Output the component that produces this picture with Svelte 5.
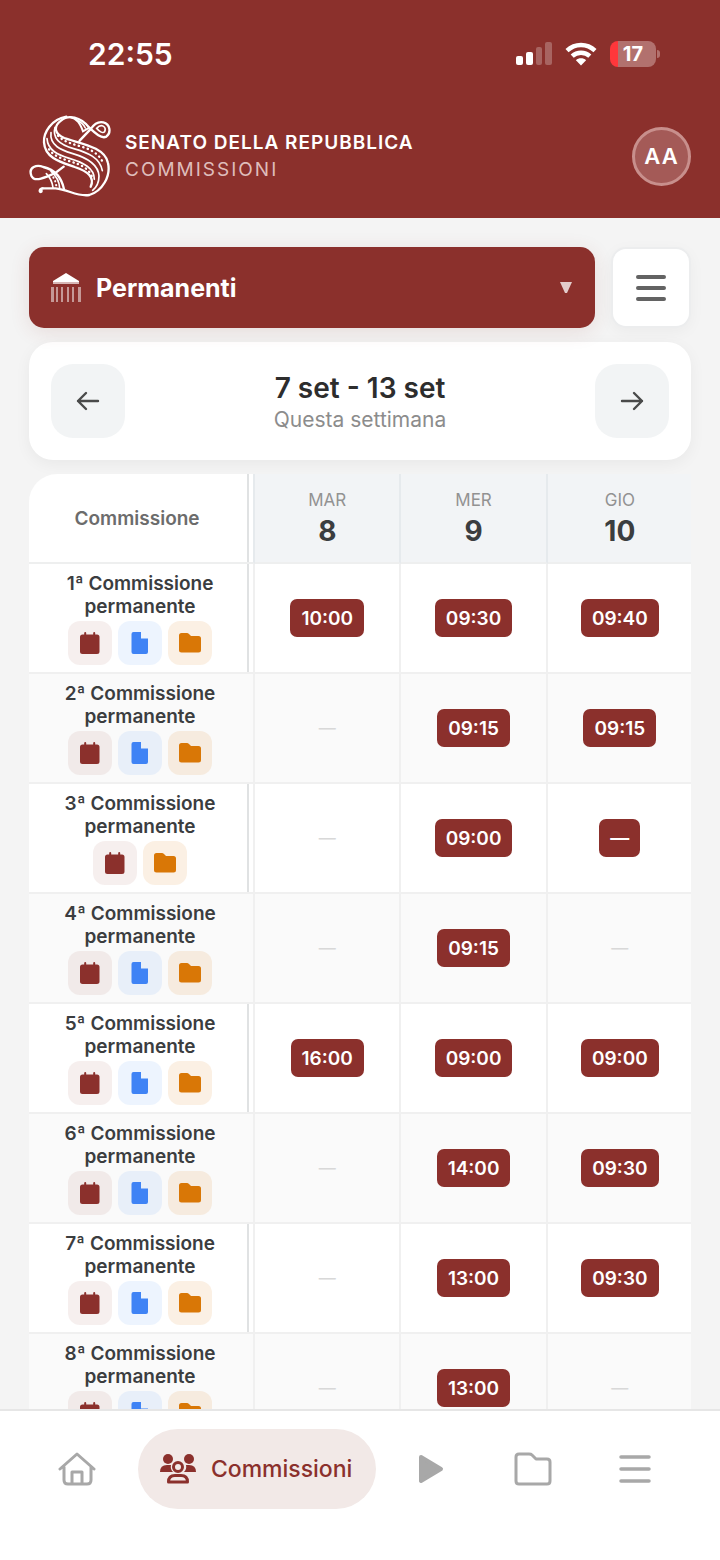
<script>
	const days = [
		{ name: 'MAR', number: 8 },
		{ name: 'MER', number: 9 },
		{ name: 'GIO', number: 10 }
	];

	const commissions = [
		{ id: 1, slots: ['10:00', '09:30', '09:40'], hasDocs: true },
		{ id: 2, slots: [null, '09:15', '09:15'], hasDocs: true },
		{ id: 3, slots: [null, '09:00', '—'], hasDocs: false },
		{ id: 4, slots: [null, '09:15', null], hasDocs: true },
		{ id: 5, slots: ['16:00', '09:00', '09:00'], hasDocs: true },
		{ id: 6, slots: [null, '14:00', '09:30'], hasDocs: true },
		{ id: 7, slots: [null, '13:00', '09:30'], hasDocs: true },
		{ id: 8, slots: [null, '13:00', null], hasDocs: true }
	];
</script>

<div class="app">
	<header>
		<div class="status">
			<span class="clock">22:55</span>
			<div class="indicators">
				<svg width="36" height="24" viewBox="0 0 36 24" fill="#fff" aria-hidden="true">
					<rect x="0" y="14" width="7" height="9" rx="2" />
					<rect x="10" y="10" width="7" height="13" rx="2" />
					<rect x="20" y="5" width="6" height="18" rx="2" opacity=".25" />
					<rect x="29" y="0" width="7" height="23" rx="2" opacity=".25" />
				</svg>
				<svg width="32" height="24" viewBox="0 0 32 24" fill="none" stroke="#fff" stroke-width="4.4" aria-hidden="true">
					<path d="M2 8.7C10 1 22 1 30 8.7" />
					<path d="M7.2 14.2C12 9.6 20 9.6 24.8 14.2" />
					<path d="M10.9 18.2C13.6 15.6 18.4 15.6 21.1 18.2L16 23.5Z" fill="#fff" stroke="none" />
				</svg>
				<div class="battery"><span>17</span></div>
			</div>
		</div>

		<div class="brand">
			<svg class="logo" width="82" height="83" viewBox="26 29 246 249" fill="none" stroke="#fff" stroke-width="7" stroke-linecap="round" aria-hidden="true">
				<path d="M178 106L212 70C222 55 235 48 249 51C270 56 273 83 258 94C243 101 226 85 207 67C180 34 144 27 122 46C97 65 104 87 132 98C176 114 254 124 263 173C272 213 246 257 207 269C171 275 145 253 106 249H66" />
				<path d="M138 34C92 42 69 83 71 111C74 160 126 172 163 185C203 198 224 217 211 244" />
				<path d="M104 66C94 104 130 122 160 130C202 142 238 156 246 196" stroke-width="5" />
				<path d="M92 82C87 121 125 135 155 144C197 156 234 174 236 212C236 232 228 246 217 255" stroke-width="5" />
				<path d="M80 100C82 136 115 149 147 159C190 172 222 188 222 222" stroke-width="5" />
				<path d="M113 91C133 112 162 117 190 126C217 135 238 148 250 176" stroke-width="7" stroke-dasharray="1 13" />
				<path d="M86 132C103 157 142 165 170 175C191 183 206 194 214 212" stroke-width="7" stroke-dasharray="1 13" />
				<path d="M148 35C170 39 179 53 188 78L207 67" stroke-width="6" />
				<path d="M170 45C181 50 190 58 195 68" stroke-width="5" />
				<path d="M229 69C243 53 259 64 253 79C247 86 236 77 229 69Z" stroke-width="5" />
				<path d="M130 184L105 203C73 216 43 233 33 211C23 184 50 177 69 185C102 193 124 216 131 252" />
				<path d="M78 205C92 219 96 231 98 247M92 198C111 214 117 230 118 248" stroke-width="5" />
				<path d="M99 216C106 228 108 238 108 246" stroke-width="6" stroke-dasharray="1 11" />
				<circle cx="61" cy="257" r="4" fill="#fff" stroke-width="5" />
				<path d="M59 254Q60 249 67 249" />
			</svg>
			<div class="brand-text">
				<strong>SENATO DELLA REPUBBLICA</strong>
				<span>COMMISSIONI</span>
			</div>
			<button class="avatar" aria-label="Profilo AA">AA</button>
		</div>
	</header>

	<main>
		<div class="filters">
			<button class="picker">
				<svg width="32" height="32" viewBox="0 0 32 32" fill="#fff" aria-hidden="true">
					<path d="M15 1L28 9V10H2V9Z" />
					<path d="M2 10H28V12H2Z" opacity=".65" />
					<path d="M0 15h3v15H0zM5 15h2v15H5zM10 15h2v15h-2zM16 15h2v15h-2zM21 15h2v15h-2zM27 15h3v15h-3z" opacity=".5" />
				</svg>
				<span>Permanenti</span>
				<svg width="12" height="12" viewBox="0 0 12 12" aria-hidden="true">
					<path d="M0 0H12L7 11H5Z" fill="#e3cccb" />
				</svg>
			</button>
			<button class="menu" aria-label="Opzioni">
				<svg width="32" height="28" viewBox="0 0 32 28" stroke="#636363" stroke-width="4" stroke-linecap="round" aria-hidden="true">
					<path d="M3 3H29M3 14H29M3 25H29" />
				</svg>
			</button>
		</div>

		<div class="week">
			<button aria-label="Settimana precedente">
				<svg width="24" height="20" viewBox="0 0 24 20" aria-hidden="true"><path d="M22 10H2M10 2L2 10L10 18" /></svg>
			</button>
			<div class="range">
				<h2>7 set - 13 set</h2>
				<p>Questa settimana</p>
			</div>
			<button aria-label="Settimana successiva">
				<svg width="24" height="20" viewBox="0 0 24 20" aria-hidden="true"><path d="M2 10H22M14 2L22 10L14 18" /></svg>
			</button>
		</div>

		<div class="table-scroll">
			<table>
				<thead>
					<tr>
						<th class="name" scope="col">Commissione</th>
						{#each days as day}
							<th class="day" scope="col">
								<span>{day.name}</span>
								<b>{day.number}</b>
							</th>
						{/each}
					</tr>
				</thead>
				<tbody>
					{#each commissions as row}
						<tr>
							<th class="name" scope="row">
								<div>{row.id}ª Commissione permanente</div>
								<div class="actions">
									<button class="calendar" aria-label="Calendario">
										<svg width="20" height="22" viewBox="0 0 20 22" fill="currentColor" aria-hidden="true">
											<path d="M2.500 2.500H4.200V1Q4.200 0 5.200 0T6.200 1V2.500H13.200V1Q13.200 0 14.200 0T15.200 1V2.500H17Q19.500 2.500 19.500 5V19.500Q19.500 22 17 22H2.500Q0 22 0 19.500V5Q0 2.500 2.500 2.500Z" />
										</svg>
									</button>
									{#if row.hasDocs}
										<button class="document" aria-label="Documenti">
											<svg width="18" height="22" viewBox="0 0 18 22" fill="currentColor" aria-hidden="true">
												<path d="M2.500 0H10V6.500H17V20Q17 22 15 22H2.500Q.5 22 .5 20V2Q.5 0 2.500 0Z" />
											</svg>
										</button>
									{/if}
									<button class="folder" aria-label="Cartella">
										<svg width="22" height="20" viewBox="0 0 22 20" fill="currentColor" aria-hidden="true">
											<path d="M2.500 0H8Q9 0 10 1L12 3H19.500Q22 3 22 5.500V17Q22 19.500 19.500 19.500H2.500Q0 19.500 0 17V2.500Q0 0 2.500 0Z" />
										</svg>
									</button>
								</div>
							</th>
							{#each row.slots as slot}
								<td>
									{#if slot}
										<button class="slot">{slot}</button>
									{:else}
										<span class="empty">—</span>
									{/if}
								</td>
							{/each}
						</tr>
					{/each}
				</tbody>
			</table>
		</div>
	</main>

	<nav>
		<a href="#home" aria-label="Home">
			<svg width="38" height="34" viewBox="0 0 38 34" fill="none" stroke="currentColor" stroke-width="3" stroke-linecap="round" stroke-linejoin="round" aria-hidden="true">
				<path d="M2 17L19 2L36 17M6 15V28Q6 32 10 32H29Q33 32 33 28V15M14 32V20H24V32" />
			</svg>
		</a>
		<a class="active" href="#commissioni" aria-current="page">
			<svg width="38" height="32" viewBox="0 0 38 32" fill="currentColor" aria-hidden="true">
				<circle cx="9" cy="6" r="5" />
				<circle cx="30" cy="6" r="5" />
				<path d="M1 19Q1 12 8 12H12Q11 16 14 19ZM25 19Q28 16 27 12H30Q37 12 37 19Z" />
				<g fill="none" stroke="currentColor" stroke-width="3" stroke-linejoin="round">
					<circle cx="19" cy="14" r="4.500" />
					<path d="M9.500 29Q9.500 22.500 16 22.500H22Q28.500 22.500 28.500 29Z" />
				</g>
			</svg>
			<span>Commissioni</span>
		</a>
		<a href="#video" aria-label="Video">
			<svg width="26" height="30" viewBox="0 0 26 30" fill="currentColor" stroke="currentColor" stroke-width="4" stroke-linejoin="round" aria-hidden="true">
				<path d="M3 3L23 15L3 27Z" />
			</svg>
		</a>
		<a href="#documenti" aria-label="Documenti">
			<svg width="38" height="34" viewBox="0 0 38 34" fill="none" stroke="currentColor" stroke-width="3" stroke-linejoin="round" aria-hidden="true">
				<path d="M5 2H15Q17 2 18 3L22 7H33Q36 7 36 10V29Q36 32 33 32H5Q2 32 2 29V5Q2 2 5 2Z" />
			</svg>
		</a>
		<a href="#altro" aria-label="Altro">
			<svg width="34" height="28" viewBox="0 0 34 28" stroke="currentColor" stroke-width="3.5" stroke-linecap="round" aria-hidden="true">
				<path d="M3 2H31M3 14H31M3 26H31" />
			</svg>
		</a>
	</nav>
</div>

<style>
	:global(body) {
		background: #f4f4f4;
	}

	.app {
		display: flex;
		flex-direction: column;
		height: 100vh;
		font-family: Inter, 'Liberation Sans', sans-serif;
		color: #3b3d3f;
	}

	button {
		display: flex;
		align-items: center;
		justify-content: center;
		padding: 0;
		border: 0;
		font: inherit;
		color: inherit;
		cursor: pointer;
	}

	svg {
		display: block;
		flex: none;
	}

	header {
		flex: none;
		background: #8b302c;
		color: #fff;
	}

	.status {
		display: flex;
		align-items: center;
		justify-content: space-between;
		height: 108px;
		padding: 0 64px 0 88px;
	}

	.clock {
		font-size: 30px;
		font-weight: 600;
	}

	.indicators {
		display: flex;
		align-items: center;
		gap: 13px;
	}

	.battery {
		position: relative;
		display: grid;
		place-items: center;
		width: 46px;
		height: 26px;
		border-radius: 8px;
		background: linear-gradient(90deg, #ff373b 8px, #b2716e 8px);
		font-size: 20px;
		font-weight: 700;
	}

	.battery::after {
		content: '';
		position: absolute;
		right: -4px;
		width: 3px;
		height: 8px;
		border-radius: 0 4px 4px 0;
		background: #b2716e;
	}

	.brand {
		display: flex;
		align-items: center;
		gap: 14px;
		height: 110px;
		padding: 0 29px 14px;
		box-sizing: border-box;
	}

	.brand-text {
		flex: 1;
		font-size: 19px;
		line-height: 27px;
		letter-spacing: 1px;
	}

	.brand-text strong,
	.brand-text span {
		display: block;
	}

	.brand-text strong {
		font-weight: 600;
	}

	.brand-text span {
		color: #dfbdbb;
		letter-spacing: 2px;
	}

	.avatar {
		width: 59px;
		height: 59px;
		border: 3px solid #c88f8c;
		border-radius: 50%;
		background: #a45a57;
		font-size: 22px;
		font-weight: 600;
		letter-spacing: 1px;
	}

	main {
		flex: 1;
		min-height: 0;
		padding: 29px 29px 0;
		overflow-y: auto;
		scrollbar-width: none;
	}

	.filters {
		display: flex;
		gap: 16px;
		margin-bottom: 14px;
	}

	.picker {
		flex: 1;
		justify-content: flex-start;
		gap: 13px;
		height: 81px;
		padding: 0 23px 0 22px;
		border-radius: 15px;
		background: #8b302c;
		box-shadow: 0 4px 20px rgba(139, 48, 44, 0.12);
		color: #fff;
		font-size: 25px;
		font-weight: 700;
	}

	.picker span {
		flex: 1;
		text-align: left;
	}

	.menu {
		width: 80px;
		height: 81px;
		border: 2px solid #ecedee;
		border-radius: 15px;
		background: #fff;
		box-shadow: 0 4px 16px rgba(0, 0, 0, 0.04);
	}

	.week {
		display: flex;
		align-items: center;
		justify-content: space-between;
		height: 118px;
		margin-bottom: 14px;
		padding: 0 22px;
		border-radius: 24px;
		background: #fff;
		box-shadow: 0 4px 16px rgba(0, 0, 0, 0.05);
	}

	.week button {
		width: 74px;
		height: 74px;
		border-radius: 22px;
		background: #f2f4f5;
	}

	.week path {
		fill: none;
		stroke: #4a4a4a;
		stroke-width: 2.4;
		stroke-linecap: round;
		stroke-linejoin: round;
	}

	.range {
		padding-top: 4px;
		text-align: center;
	}

	h2 {
		margin: 0;
		color: #2d2d2d;
		font-size: 28px;
		font-weight: 600;
		line-height: 34px;
	}

	p {
		margin: 0;
		color: #8c8c8c;
		font-size: 21px;
		line-height: 30px;
	}

	.table-scroll {
		overflow: auto hidden;
		scrollbar-width: none;
		border-radius: 28px 0 0 0;
		background: #fff;
	}

	table {
		width: calc(100% + 3px);
		table-layout: fixed;
		border-spacing: 0;
	}

	th,
	td {
		height: 110px;
		padding: 0;
		box-sizing: border-box;
		border-right: 2px solid #f0f0f0;
		border-bottom: 2px solid #f0f0f0;
		text-align: center;
	}

	thead th {
		height: 90px;
		border-right-color: #e6eaed;
		border-bottom-color: #eeefef;
	}

	.name {
		width: 34%;
		padding: 0 6px 0 0;
		font-size: 19px;
		font-weight: 600;
		line-height: 23px;
		box-shadow: inset -4px 0 #fff, inset -6px 0 #e0e2e3;
	}

	thead .name {
		padding-right: 8px;
		color: #6c6c6c;
	}

	tbody .name {
		padding: 1px 4px 0 2px;
	}

	tbody .name > div:first-child {
		padding: 0 24px;
	}

	tbody tr:nth-child(even) {
		background: #fafafa;
	}

	tbody tr:nth-child(even) .name {
		box-shadow: none;
	}

	.day {
		background: #f2f4f6;
	}

	.day span,
	.day b {
		display: block;
	}

	.day span {
		color: #929292;
		font-size: 17px;
		font-weight: 400;
		line-height: 26px;
	}

	.day b {
		font-size: 28px;
		font-weight: 700;
		line-height: 36px;
	}

	.actions {
		display: flex;
		justify-content: center;
		gap: 6px;
		margin-top: 3px;
	}

	.actions button {
		width: 44px;
		height: 44px;
		border-radius: 12px;
	}

	.calendar {
		background: rgba(139, 48, 44, 0.08);
		color: #8b302c;
	}

	.document {
		background: rgba(59, 130, 246, 0.09);
		color: #3f83f5;
	}

	.folder {
		background: rgba(217, 119, 6, 0.11);
		color: #d97706;
	}

	.slot {
		display: inline-flex;
		height: 38px;
		padding: 0 11px;
		border-radius: 7px;
		background: #8b302c;
		color: #fff;
		font-size: 19px;
		font-weight: 600;
		vertical-align: middle;
	}

	.empty {
		color: #d8d8d8;
		font-size: 17px;
	}

	nav {
		display: flex;
		align-items: flex-start;
		flex: none;
		height: 151px;
		padding: 18px 34px 0 26px;
		box-sizing: border-box;
		border-top: 2px solid #e6e6e6;
		background: #fff;
	}

	nav a {
		display: flex;
		flex: 1;
		align-items: center;
		justify-content: center;
		height: 80px;
		color: #a8a8a8;
		text-decoration: none;
	}

	nav .active {
		flex: none;
		gap: 14px;
		margin: 0 4px 0 10px;
		padding: 0 24px 0 21px;
		border-radius: 40px;
		background: #f2e9e7;
		color: #8b302c;
		font-size: 23px;
		font-weight: 500;
	}
</style>
